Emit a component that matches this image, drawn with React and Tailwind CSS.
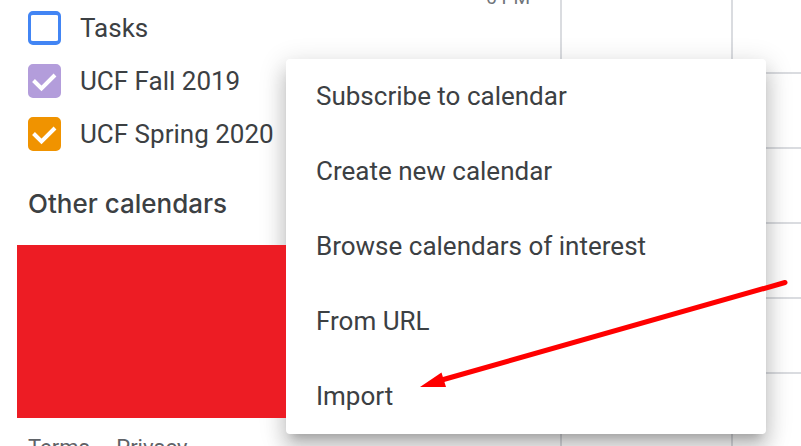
const calendars = [
  { id: 'tasks', name: 'Tasks', box: 'border-[#4285f4] bg-white', checked: false },
  { id: 'fall', name: 'UCF Fall 2019', box: 'border-[#b39ddb] bg-[#b39ddb]', checked: true },
  { id: 'spring', name: 'UCF Spring 2020', box: 'border-[#f09300] bg-[#f09300]', checked: true },
];

const menuItems = [
  'Subscribe to calendar',
  'Create new calendar',
  'Browse calendars of interest',
  'From URL',
  'Import',
];

function CalendarRow({ id, name, box, checked }) {
  return (
    <li className="flex h-[53px] items-center gap-[19px] text-[26px] leading-8">
      <span className="grid shrink-0">
        <input
          id={id}
          type="checkbox"
          defaultChecked={checked}
          className={`peer col-start-1 row-start-1 h-[34px] w-[33px] appearance-none rounded-[5px] border-x-3 border-y-4 ${box}`}
        />
        <svg
          viewBox="0 0 33 34"
          className="pointer-events-none invisible col-start-1 row-start-1 h-[34px] w-[33px] peer-checked:visible"
          fill="none"
          stroke="white"
          strokeWidth="4"
          aria-hidden="true"
        >
          <path d="M5.5 16.500 13.500 24.500 27 11" />
        </svg>
      </span>
      <label htmlFor={id} className="whitespace-nowrap">{name}</label>
    </li>
  );
}

function Sidebar() {
  return (
    <aside className="flex w-[286px] shrink-0 flex-col">
      <ul className="flex shrink-0 flex-col pt-px pl-7">
        {calendars.map((c) => (
          <CalendarRow key={c.id} {...c} />
        ))}
      </ul>
      <h2 className="pt-7 pl-7 font-['Inter',sans-serif] text-[26px] leading-8 font-medium">Other calendars</h2>
      <div className="relative z-20 mt-[25px] ml-[17px] h-[173px] shrink-0 bg-[#ed1c24]" />
      <footer className="flex shrink-0 gap-1.5 pt-[14px] pl-7 text-[22px] leading-8 text-[#5f6368]">
        <a href="#terms">Terms</a>
        <span>–</span>
        <a href="#privacy">Privacy</a>
      </footer>
    </aside>
  );
}

function DayColumn({ width }) {
  return (
    <div className={`border-l-2 border-[#dadce0] ${width}`}>
      <div className="h-[74px] border-b-2 border-[#dadce0]" />
      {[0, 1, 2, 3, 4].map((row) => (
        <div key={row} className="h-[75px] border-b-2 border-[#dadce0]" />
      ))}
    </div>
  );
}

function WeekGrid() {
  return (
    <main className="flex min-w-0 grow">
      <div className="flex w-[274px] shrink-0 justify-end pr-[30px] text-[19px] leading-6 text-[#70757a]">
        <span className="-mt-[14px]">6 PM</span>
      </div>
      <DayColumn width="w-[171px] shrink-0" />
      <DayColumn width="grow" />
    </main>
  );
}

function AddMenu() {
  return (
    <div
      role="menu"
      className="absolute top-[59px] left-[286px] z-10 w-[480px] rounded-[4px] bg-white shadow-[0_15px_19px_2px_rgba(0,0,0,0.14),0_6px_26px_4px_rgba(0,0,0,0.12),0_9px_9px_-6px_rgba(0,0,0,0.2)]"
    >
      {menuItems.map((item) => (
        <button
          key={item}
          role="menuitem"
          type="button"
          className="block h-[75px] w-full px-[30px] pb-0.5 text-left text-[26px] leading-8"
        >
          {item}
        </button>
      ))}
    </div>
  );
}

function Arrow() {
  return (
    <svg
      className="pointer-events-none absolute top-[270px] left-[410px] z-30 h-[130px] w-[390px]"
      viewBox="410 270 390 130"
      aria-hidden="true"
    >
      <path d="M785 282.500 L440 380.500" stroke="#ff0000" strokeWidth="5" strokeLinecap="round" />
      <path d="M420 387 L441.500 372.500 L446 387 Z" fill="#ff0000" />
    </svg>
  );
}

export default function App() {
  return (
    <div className="relative flex h-screen overflow-hidden bg-white font-['Roboto',sans-serif] text-[#3c4043]">
      <Sidebar />
      <WeekGrid />
      <AddMenu />
      <Arrow />
    </div>
  );
}
